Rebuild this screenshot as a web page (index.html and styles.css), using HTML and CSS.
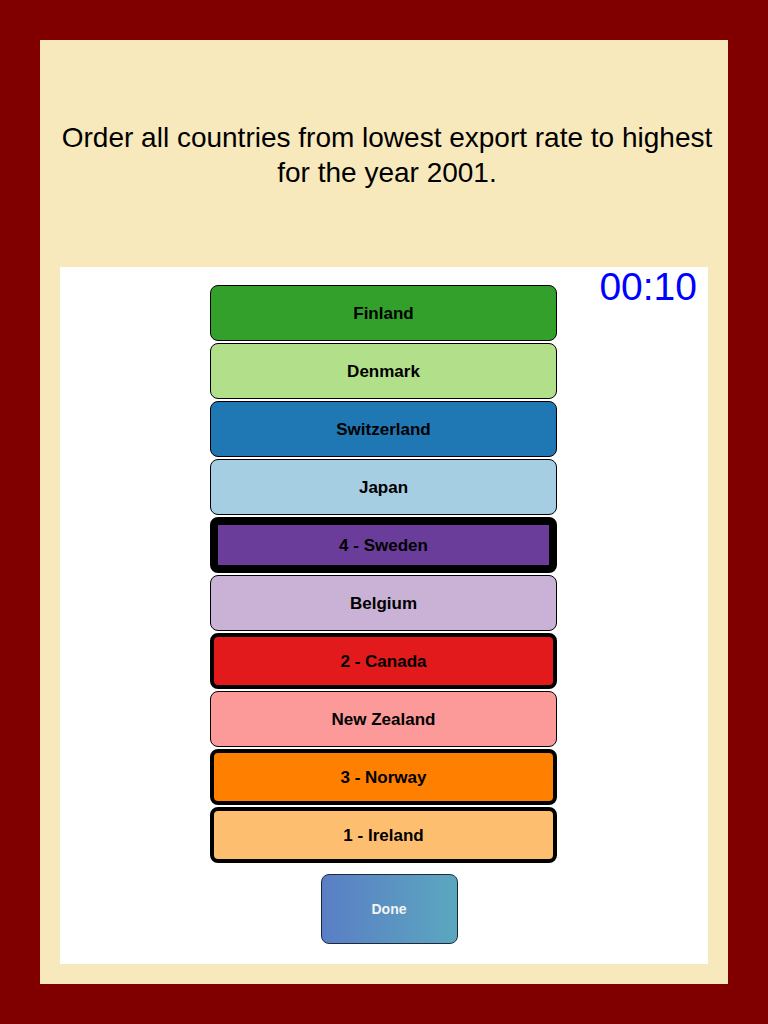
FILE: index.html
```html
<!DOCTYPE html>
<html>
<head>
<meta charset="utf-8">
<link rel="stylesheet" href="styles.css">
</head>
<body>
<div class="frame">
  <div class="panel">
    <div class="prompt">Order all countries from lowest export rate to highest<br>for the year 2001.</div>
    <div class="board">
      <div class="timer">00:10</div>
      <div class="list">
        <div class="item c-finland">Finland</div>
        <div class="item c-denmark">Denmark</div>
        <div class="item c-switzerland">Switzerland</div>
        <div class="item c-japan">Japan</div>
        <div class="item c-sweden heavy">4 - Sweden</div>
        <div class="item c-belgium">Belgium</div>
        <div class="item c-canada picked">2 - Canada</div>
        <div class="item c-newzealand">New Zealand</div>
        <div class="item c-norway picked">3 - Norway</div>
        <div class="item c-ireland picked">1 - Ireland</div>
      </div>
      <div class="done">Done</div>
    </div>
  </div>
</div>
</body>
</html>
```

FILE: styles.css
```css
html, body {
  margin: 0;
  padding: 0;
}
body {
  background: #800000;
  font-family: "Liberation Sans", Arial, sans-serif;
}
.frame {
  width: 768px;
  height: 1024px;
  box-sizing: border-box;
  padding: 40px;
}
.panel {
  height: 100%;
  box-sizing: border-box;
  background: #f8e9bd;
  padding: 0 0 20px;
  display: flex;
  flex-direction: column;
}
.prompt {
  height: 227px;
  box-sizing: border-box;
  padding: 2px 0 0 6px;
  flex: none;
  display: flex;
  align-items: center;
  justify-content: center;
  text-align: center;
  font-size: 28px;
  line-height: 35px;
  color: #000;
  white-space: nowrap;
}
.board {
  flex: 1;
  margin: 0 20px;
  background: #fff;
  position: relative;
  padding-top: 18px;
  display: flex;
  flex-direction: column;
  align-items: center;
}
.timer {
  position: absolute;
  top: 0;
  right: 11px;
  color: #0000ff;
  font-size: 39px;
  line-height: 39px;
}
.list {
  width: 347px;
  margin-right: 1px;
  display: flex;
  flex-direction: column;
  gap: 2px;
}
.item {
  height: 56px;
  box-sizing: border-box;
  border: 1px solid #000;
  border-radius: 8px;
  padding-top: 2px;
  display: flex;
  align-items: center;
  justify-content: center;
  font-weight: bold;
  font-size: 17px;
  color: #000;
}
.item.picked {
  border-width: 4px;
}
.item.heavy {
  border-width: 8px;
}
.c-finland { background: #33a02c; }
.c-denmark { background: #b2df8a; }
.c-switzerland { background: #1f78b4; }
.c-japan { background: #a6cee3; }
.c-sweden { background: #6a3d9a; }
.c-belgium { background: #cab2d6; }
.c-canada { background: #e31a1c; }
.c-newzealand { background: #fb9a99; }
.c-norway { background: #ff7f00; }
.c-ireland { background: #fdbf6f; }
.done {
  margin-top: 11px;
  margin-left: 10px;
  width: 137px;
  height: 70px;
  box-sizing: border-box;
  border: 1px solid #1e2a3a;
  border-radius: 8px;
  background: linear-gradient(to right, #5a7ec5, #5ba7bf);
  color: #f4f4f4;
  font-weight: bold;
  font-size: 14px;
  display: flex;
  align-items: center;
  justify-content: center;
}
```
